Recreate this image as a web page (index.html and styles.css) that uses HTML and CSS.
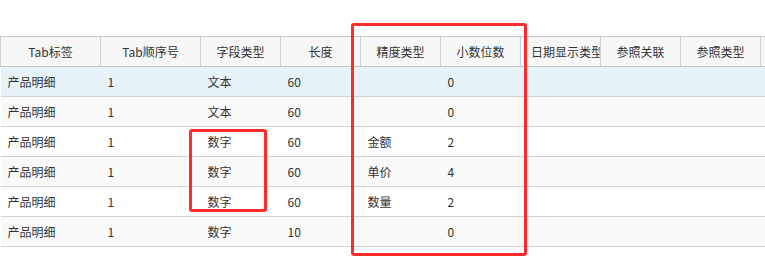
FILE: index.html
```html
<!DOCTYPE html>
<html lang="zh">
<head>
<meta charset="utf-8">
<link rel="stylesheet" href="styles.css">
</head>
<body>
<div class="page">
  <table class="grid">
    <colgroup>
      <col class="w100"><col class="w100"><col class="w80"><col class="w80"><col class="w80"><col class="w80"><col class="w80"><col class="w80"><col class="w80"><col class="w80">
    </colgroup>
    <thead>
      <tr>
        <th>Tab标签</th><th>Tab顺序号</th><th>字段类型</th><th>长度</th><th>精度类型</th><th>小数位数</th><th class="left">日期显示类型</th><th>参照关联</th><th>参照类型</th><th></th>
      </tr>
    </thead>
    <tbody>
      <tr class="sel"><td>产品明细</td><td>1</td><td>文本</td><td>60</td><td></td><td>0</td><td></td><td></td><td></td><td></td></tr>
      <tr class="alt"><td>产品明细</td><td>1</td><td>文本</td><td>60</td><td></td><td>0</td><td></td><td></td><td></td><td></td></tr>
      <tr><td>产品明细</td><td>1</td><td>数字</td><td>60</td><td>金额</td><td>2</td><td></td><td></td><td></td><td></td></tr>
      <tr class="alt"><td>产品明细</td><td>1</td><td>数字</td><td>60</td><td>单价</td><td>4</td><td></td><td></td><td></td><td></td></tr>
      <tr><td>产品明细</td><td>1</td><td>数字</td><td>60</td><td>数量</td><td>2</td><td></td><td></td><td></td><td></td></tr>
      <tr class="alt"><td>产品明细</td><td>1</td><td>数字</td><td>10</td><td></td><td>0</td><td></td><td></td><td></td><td></td></tr>
    </tbody>
  </table>
  <div class="mark mark-a"></div>
  <div class="mark mark-b"></div>
</div>
</body>
</html>
```
FILE: styles.css
```css
html, body {
  margin: 0;
  padding: 0;
  background: #fff;
  overflow: hidden;
}
.page {
  position: relative;
  width: 765px;
  height: 266px;
  padding-top: 36px;
  box-sizing: border-box;
  overflow: hidden;
  font-family: "Microsoft YaHei", "Noto Sans CJK SC", "Noto Sans", sans-serif;
  font-size: 12px;
  color: #333;
}
.grid {
  border-collapse: collapse;
  table-layout: fixed;
  width: 840px;
}
.w100 { width: 100px; }
.w80 { width: 80px; }
.grid th {
  height: 30px;
  padding: 0 10px;
  background: #f7f7f7;
  border-top: 1px solid #c6c6c6;
  border-bottom: 1px solid #c6c6c6;
  border-left: 1px solid #c9d0db;
  font-weight: normal;
  text-align: center;
  white-space: nowrap;
  overflow: hidden;
  color: #333;
  box-sizing: border-box;
}
.grid th.left { text-align: left; }
.grid td {
  height: 29px;
  padding: 0 7px;
  border-bottom: 1px solid #d2d2d2;
  white-space: nowrap;
  overflow: hidden;
  background: #fff;
}
.grid tr.alt td { background: #f9f9f9; }
.grid tr.sel td { background: #e6f4fa; }
.mark {
  position: absolute;
  border: 3px solid #ff2a2a;
  border-radius: 3px;
  box-sizing: border-box;
}
.mark-a {
  left: 351px;
  top: 23px;
  width: 176px;
  height: 233px;
}
.mark-b {
  left: 189px;
  top: 129px;
  width: 78px;
  height: 83px;
}
```
